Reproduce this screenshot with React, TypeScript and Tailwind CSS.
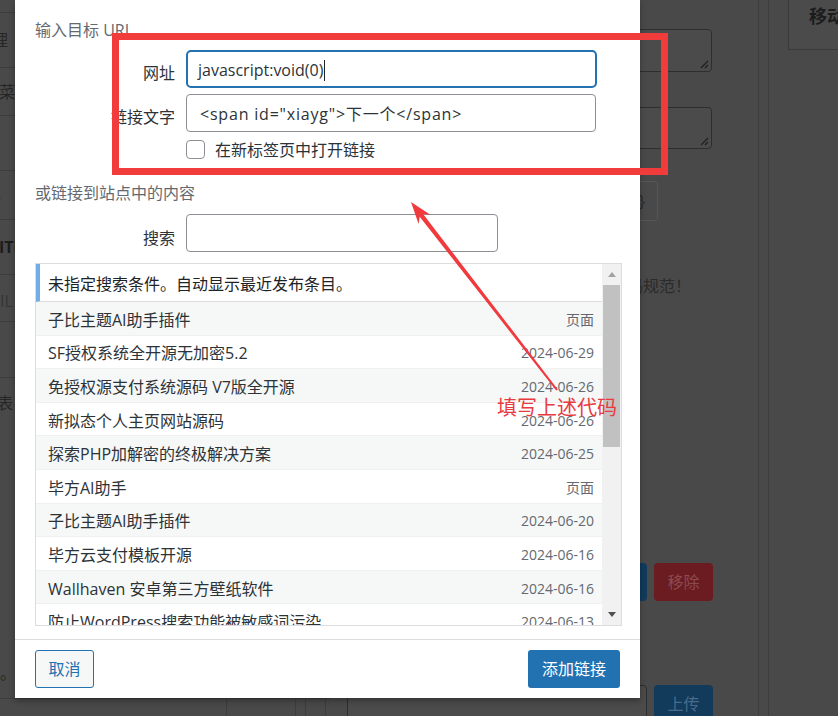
import React from "react";

const posts: [string, string][] = [
  ["子比主题AI助手插件", "页面"],
  ["SF授权系统全开源无加密5.2", "2024-06-29"],
  ["免授权源支付系统源码 V7版全开源", "2024-06-26"],
  ["新拟态个人主页网站源码", "2024-06-26"],
  ["探索PHP加解密的终极解决方案", "2024-06-25"],
  ["毕方AI助手", "页面"],
  ["子比主题AI助手插件", "2024-06-20"],
  ["毕方云支付模板开源", "2024-06-16"],
  ["Wallhaven 安卓第三方壁纸软件", "2024-06-16"],
  ["防止WordPress搜索功能被敏感词污染", "2024-06-13"],
];

function Grip() {
  return (
    <svg width="10" height="10" viewBox="0 0 10 10">
      <path d="M9 2L2 9M9 6L6 9" stroke="#1f1f1f" strokeWidth="1.2" />
    </svg>
  );
}

function Scrollbar() {
  return (
    <div className="w-[19px] bg-[#f1f1f1] flex flex-col">
      <div className="h-[21px] flex items-center justify-center">
        <span className="w-0 h-0 border-x-[4px] border-x-transparent border-b-[5px] border-b-[#a3a3a3]" />
      </div>
      <div className="h-[162px] mx-[1px] bg-[#c1c1c1]" />
      <div className="flex-1" />
      <div className="h-[21px] flex items-center justify-center">
        <span className="w-0 h-0 border-x-[4px] border-x-transparent border-t-[5px] border-t-[#505050]" />
      </div>
    </div>
  );
}

export default function App() {
  return (
    <div className="relative w-[838px] h-[716px] overflow-hidden bg-[#494949] font-['Open_Sans','Noto_Sans_CJK_SC',sans-serif]">
      {/* dimmed admin page behind the modal */}
      <div className="flex h-full">
        <div className="w-[330px] shrink-0 flex flex-col text-[16px] leading-[24px] text-[#262626] whitespace-nowrap">
          <div className="h-[13px] shrink-0 border-b border-[#3d3d3d]" />
          <div className="h-[55px] shrink-0 border-b border-[#3d3d3d] flex items-center">
            <span className="-ml-[8px]">理</span>
          </div>
          <div className="h-[48px] shrink-0 border-b border-[#3d3d3d] flex items-center">
            <span className="-ml-[1px]">菜单</span>
          </div>
          <div className="h-[55px] shrink-0 border-b border-[#3d3d3d]" />
          <div className="h-[49px] shrink-0 border-b border-[#3d3d3d] flex items-center pt-[8px]">
            <span className="-ml-[2px] text-[12px]">·</span>
          </div>
          <div className="h-[55px] shrink-0 border-b border-[#3d3d3d] flex items-center">
            <span className="-ml-[1px] font-bold text-[#1c1c1c]">ITI</span>
          </div>
          <div className="h-[47px] shrink-0 border-b border-[#3d3d3d] flex items-center pt-[6px]">
            <span className="text-[#353535]">IL (</span>
          </div>
          <div className="h-[56px] shrink-0 border-b border-[#3d3d3d]" />
          <div className="flex-1 pt-[13px]">
            <div className="-ml-[3px]">表</div>
            <div className="mt-[246px]">。</div>
          </div>
          <div className="h-[18px] shrink-0 border-t border-[#3d3d3d] flex">
            <div className="w-[227px] border-r border-[#3d3d3d]" />
            <div className="w-[69px] border-r border-[#3d3d3d]" />
            <div className="w-[10px] border-r border-[#3d3d3d]" />
            <div className="w-[20px] border-r border-[#3d3d3d]" />
          </div>
        </div>

        <div className="w-[428px] shrink-0 flex flex-col text-[16px] leading-[24px]">
          <div className="mt-[29px] shrink-0 w-[382px] h-[43px] rounded-[4px] border border-[#2e2e2e] bg-[#4b4b4b] flex items-end justify-end p-[2px]">
            <Grip />
          </div>
          <div className="mt-[35px] shrink-0 w-[382px] h-[42px] rounded-[4px] border border-[#2e2e2e] bg-[#4b4b4b] flex items-end justify-end p-[2px]">
            <Grip />
          </div>
          <div className="mt-[32px] shrink-0 ml-[290px] w-[38px] h-[40px] rounded-[3px] border border-[#565656] flex items-center justify-center text-[#2a2a2a]">
            {"{}"}
          </div>
          <div className="mt-[53px] shrink-0 w-[361px] text-right whitespace-nowrap text-[#2b2b2b]">请遵守代码规范！</div>
          <div className="mt-[265px] shrink-0 w-[383px] flex justify-end gap-[7px]">
            <div className="w-[80px] h-[38px] rounded-[4px] bg-[#113b5c]" />
            <div className="w-[59px] h-[38px] rounded-[4px] bg-[#6a1c20] flex items-center justify-center text-[#8e4a4e]">
              移除
            </div>
          </div>
          <div className="mt-[84px] shrink-0 w-[383px] flex justify-end gap-[7px]">
            <div className="w-[300px] h-[38px] rounded-[4px] border border-[#2e2e2e] bg-[#4b4b4b]" />
            <div className="w-[59px] h-[38px] rounded-[4px] bg-[#113a5b] flex items-center justify-center text-[#4a6b8b]">
              上传
            </div>
          </div>
        </div>

        <div className="flex-1 min-w-0 flex border-l border-[#3d3d3d]">
          <div className="w-[10px] shrink-0 border-r border-[#3d3d3d]" />
          <div className="pl-[19px] shrink-0">
            <div className="w-[60px] h-[50px] border border-t-0 border-[#3a3a3a] bg-[#4b4b4b] pl-[20px] pt-[3px] text-[18px] leading-[26px] font-bold text-[#1c1c1c] whitespace-nowrap">
              移动
            </div>
          </div>
        </div>
      </div>

      {/* insert link modal */}
      <div className="absolute left-[15px] top-0 w-[625px] h-[698px] bg-white flex flex-col shadow-[0_3px_6px_rgba(0,0,0,0.3)]">
        <div className="flex-1 px-[20px] pt-[18px] text-[16px] leading-[24px] text-[#2c3338]">
          <div className="text-[#646970]">输入目标 URL</div>

          <div className="mt-[8px] flex items-start">
            <label className="w-[140px] text-right pt-[11px]">网址</label>
            <div className="ml-[11px] w-[411px] h-[38px] rounded-[5px] border-2 border-[#2271b1] pl-[10px] pt-[2px] flex items-center whitespace-nowrap">
              javascript:void(0)
              <span className="ml-[1px] w-px h-[21px] bg-[#1d2327]" />
            </div>
          </div>

          <div className="mt-[6px] flex items-start">
            <label className="w-[140px] text-right pt-[11px]">链接文字</label>
            <div className="ml-[11px] w-[410px] h-[38px] rounded-[4px] border border-[#8c8f94] pl-[13px] pt-[2px] flex items-center whitespace-nowrap tracking-[0.8px]">
              {'<span id="xiayg">下一个</span>'}
            </div>
          </div>

          <div className="mt-[8px] ml-[151px] h-[19px] flex items-center gap-[10px]">
            <span className="w-[19px] h-[19px] rounded-[4px] border border-[#8c8f94] bg-white" />
            <span>在新标签页中打开链接</span>
          </div>

          <div className="mt-[22px] text-[#646970]">或链接到站点中的内容</div>

          <div className="mt-[9px] flex items-start">
            <label className="w-[140px] text-right pt-[12px]">搜索</label>
            <div className="ml-[11px] w-[312px] h-[38px] rounded-[4px] border border-[#8c8f94]" />
          </div>

          <div className="mt-[11px] w-[587px] h-[363px] border border-[#dcdcde] flex">
            <div className="flex-1 overflow-hidden flex flex-col">
              <div className="h-[38px] shrink-0 border-b border-[#dcdcde] border-l-4 border-l-[#72aee6] pl-[8px] pt-[2px] flex items-center text-[#1d2327]">
                未指定搜索条件。自动显示最近发布条目。
              </div>
              {posts.map(([title, info], i) => (
                <div
                  key={i}
                  className={`h-[33.6px] shrink-0 border-b border-[#f0f0f1] pl-[12px] pr-[8px] pt-[3px] flex items-center justify-between ${
                    i % 2 === 0 ? "bg-[#f6f7f7]" : "bg-white"
                  }`}
                >
                  <span className="whitespace-nowrap text-[#2c3338]">{title}</span>
                  <span className="whitespace-nowrap text-[14px] leading-[20px] text-[#646970]">{info}</span>
                </div>
              ))}
            </div>
            <Scrollbar />
          </div>
        </div>

        <div className="h-[59px] border-t border-[#dcdcde] px-[20px] flex items-center justify-between text-[16px]">
          <button className="w-[59px] h-[38px] rounded-[3px] border border-[#2271b1] bg-[#f6f7f7] text-[#2271b1]">
            取消
          </button>
          <button className="w-[92px] h-[38px] rounded-[3px] bg-[#2271b1] text-white">添加链接</button>
        </div>
      </div>

      {/* annotation */}
      <div className="absolute left-[112px] top-[33px] w-[556px] h-[142px] border-[7px] border-[#f23b3b]" />
      <svg className="absolute inset-0 pointer-events-none" width="838" height="716" viewBox="0 0 838 716">
        <polygon
          points="556.2,390.6 419.7,216.8 418.6,224 411,202 430.4,214.8 423.1,214.1 557.8,389.4"
          fill="#f03a3d"
        />
      </svg>
      <div className="absolute left-[497px] top-[393px] text-[20px] leading-[28px] text-[#e83a3f] whitespace-nowrap font-['Noto_Sans_CJK_SC',sans-serif]">
        填写上述代码
      </div>
    </div>
  );
}
